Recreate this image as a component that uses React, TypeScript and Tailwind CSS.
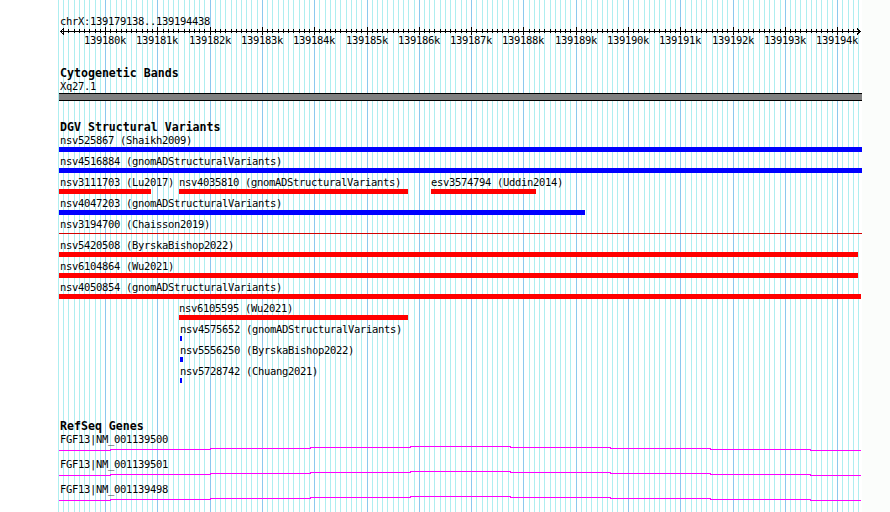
import React from 'react'

const START = 139179138
const END = 139194438
const LEFT = 60
const WIDTH = 800

const toX = (bp: number) => LEFT + ((bp - START) * WIDTH) / (END - START)

interface Feature {
  x: number
  w: number
  label: string
  color: 'blue' | 'red' | 'line'
}

const DGV_ROWS: Feature[][] = [
  [{ x: 59, w: 803, label: 'nsv525867 (Shaikh2009)', color: 'blue' }],
  [{ x: 59, w: 803, label: 'nsv4516884 (gnomADStructuralVariants)', color: 'blue' }],
  [
    { x: 59, w: 92, label: 'nsv3111703 (Lu2017)', color: 'red' },
    { x: 179, w: 229, label: 'nsv4035810 (gnomADStructuralVariants)', color: 'red' },
    { x: 431, w: 105, label: 'esv3574794 (Uddin2014)', color: 'red' },
  ],
  [{ x: 59, w: 526, label: 'nsv4047203 (gnomADStructuralVariants)', color: 'blue' }],
  [{ x: 59, w: 803, label: 'nsv3194700 (Chaisson2019)', color: 'line' }],
  [{ x: 59, w: 799, label: 'nsv5420508 (ByrskaBishop2022)', color: 'red' }],
  [{ x: 59, w: 799, label: 'nsv6104864 (Wu2021)', color: 'red' }],
  [{ x: 59, w: 802, label: 'nsv4050854 (gnomADStructuralVariants)', color: 'red' }],
  [{ x: 179, w: 229, label: 'nsv6105595 (Wu2021)', color: 'red' }],
  [{ x: 180, w: 2, label: 'nsv4575652 (gnomADStructuralVariants)', color: 'blue' }],
  [{ x: 180, w: 3, label: 'nsv5556250 (ByrskaBishop2022)', color: 'blue' }],
  [{ x: 180, w: 2, label: 'nsv5728742 (Chuang2021)', color: 'blue' }],
]

const GENES = ['FGF13|NM_001139500', 'FGF13|NM_001139501', 'FGF13|NM_001139498']

// step heights of the transcript line, one per 100px segment
const GENE_STEPS: Array<[number, number, number]> = [
  [59, 110, 4],
  [110, 210, 3],
  [210, 310, 2],
  [310, 410, 1],
  [410, 510, 0],
  [510, 610, 1],
  [610, 710, 2],
  [710, 810, 3],
  [810, 861, 4],
]

function Grid() {
  const lines = []
  for (let bp = 139179100; bp <= 139194400; bp += 100) {
    const x = Math.round(toX(bp))
    const major = bp % 1000 === 0
    lines.push(
      <rect key={bp} x={x} y={0} width={1} height={512} fill={major ? '#8cc8ee' : '#aeeef0'} />
    )
  }
  return (
    <svg className="absolute inset-0" width={890} height={512} shapeRendering="crispEdges">
      <rect x={862} y={0} width={28} height={512} fill="#fbfdfb" />
      {lines}
    </svg>
  )
}

function Ruler() {
  const ticks = []
  const labels = []
  for (let bp = 139179200; bp <= 139194400; bp += 100) {
    const x = Math.round(toX(bp)) + 0.5
    const major = bp % 1000 === 0
    ticks.push(
      <line key={bp} x1={x} x2={x} y1={major ? 27 : 29} y2={major ? 35 : 33} stroke="#000" />
    )
    if (major) {
      labels.push(
        <span
          key={bp}
          className="absolute top-[34px] h-[13px] leading-[13px] whitespace-nowrap"
          style={{ left: Math.round(toX(bp)) - 21 }}
        >
          {bp / 1000}k
        </span>
      )
    }
  }
  return (
    <div className="relative h-[67px]">
      <div className="absolute top-[15px] left-[60px] h-[13px] leading-[13px]">
        chrX:139179138..139194438
      </div>
      <svg className="absolute top-0 left-0" width={890} height={40} shapeRendering="crispEdges">
        <line x1={60} x2={861} y1={31.5} y2={31.5} stroke="#000" />
        <polyline points="64,28.5 60.5,31.5 64,34.5" fill="none" stroke="#000" />
        <polyline points="857,28.5 860.5,31.5 857,34.5" fill="none" stroke="#000" />
        {ticks}
      </svg>
      {labels}
    </div>
  )
}

function TrackTitle({ children, tall }: { children: React.ReactNode; tall?: boolean }) {
  return (
    <div
      className={`pl-[60px] text-[11.6px] tracking-normal font-bold whitespace-nowrap ${
        tall ? 'h-[14px] leading-[14px]' : 'h-[13px] leading-[13px]'
      }`}
    >
      {children}
    </div>
  )
}

function DgvRow({ features }: { features: Feature[] }) {
  return (
    <div className="relative h-[21px]">
      {features.map((f) => (
        <div key={f.label} className="absolute top-0" style={{ left: f.x }}>
          <div className={`h-[13px] leading-[13px] whitespace-nowrap ${f.x === 59 ? 'pl-px' : ''}`}>
            {f.label}
          </div>
          {f.color === 'line' ? (
            <div className="h-[5px] flex items-center">
              <div className="h-px bg-[#d40000]" style={{ width: f.w }} />
            </div>
          ) : (
            <div
              className={`h-[5px] ${f.color === 'blue' ? 'bg-[#0000ff]' : 'bg-[#ff0000]'}`}
              style={{ width: f.w }}
            />
          )}
        </div>
      ))}
    </div>
  )
}

function GeneRow({ name }: { name: string }) {
  const pts: string[] = []
  GENE_STEPS.forEach(([a, b, y]) => {
    pts.push(`${a},${y + 0.5}`, `${b},${y + 0.5}`)
  })
  return (
    <div className="h-[25px]">
      <div className="h-[13px] pl-[60px] leading-[13px] whitespace-nowrap">{name}</div>
      <svg width={890} height={12} className="block" shapeRendering="crispEdges">
        <polyline points={pts.join(' ')} fill="none" stroke="#ff00ff" strokeWidth={1} />
      </svg>
    </div>
  )
}

export default function App() {
  return (
    <div className="relative w-[890px] h-[512px] overflow-hidden bg-white text-black text-[10.5px] tracking-[-0.32px] font-['DejaVu_Sans_Mono','Liberation_Mono',monospace]">
      <Grid />
      <div className="relative flex flex-col">
        <Ruler />

        <TrackTitle>Cytogenetic Bands</TrackTitle>
        <div className="h-[13px] pl-[60px] leading-[13px]">Xq27.1</div>
        <div className="ml-[59px] w-[803px] h-[8px] border-y border-black bg-[#808080]" />

        <div className="h-[19px]" />
        <TrackTitle tall>DGV Structural Variants</TrackTitle>
        {DGV_ROWS.map((row, i) => (
          <DgvRow key={i} features={row} />
        ))}

        <div className="h-[34px]" />
        <TrackTitle>RefSeq Genes</TrackTitle>
        {GENES.map((g) => (
          <GeneRow key={g} name={g} />
        ))}
      </div>
    </div>
  )
}
